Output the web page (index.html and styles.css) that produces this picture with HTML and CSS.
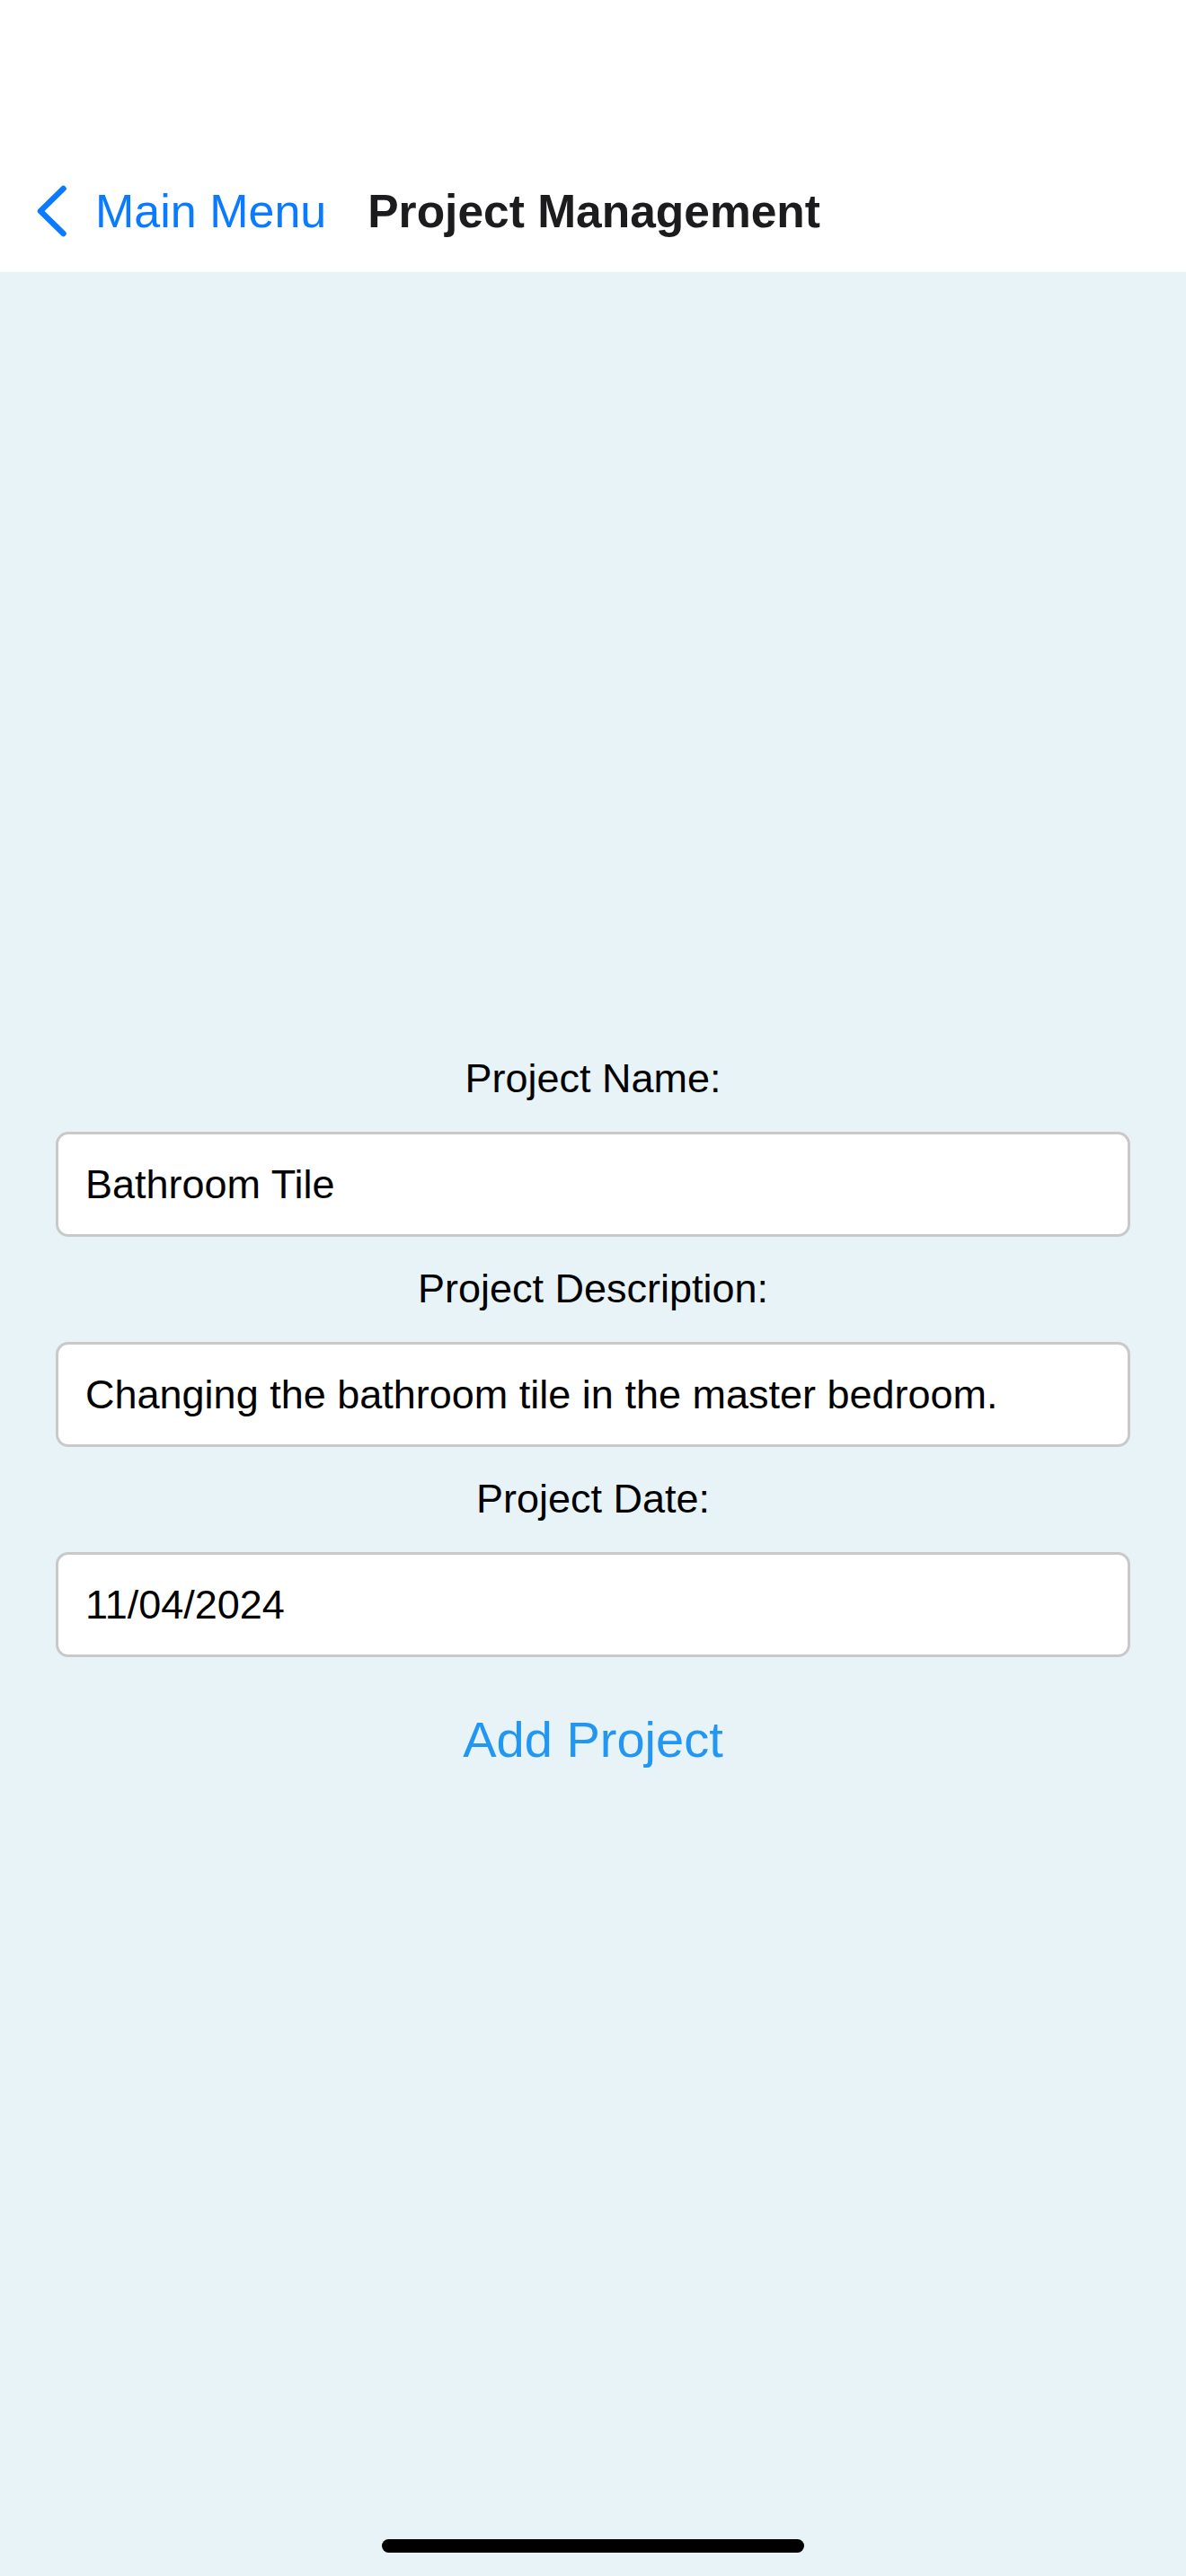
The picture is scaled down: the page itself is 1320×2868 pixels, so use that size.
FILE: index.html
```html
<!DOCTYPE html>
<html lang="en">
<head>
<meta charset="utf-8">
<title>Project Management</title>
<link rel="stylesheet" href="styles.css">
</head>
<body>
<div class="screen">
  <header class="navbar">
    <div class="nav-row">
      <a class="back" href="#">
        <svg class="chevron" width="35" height="58" viewBox="0 0 35 58" aria-hidden="true">
          <polyline points="30.5,4 5,29 30.5,54" fill="none" stroke="#0a7aff" stroke-width="6.5" stroke-linecap="round" stroke-linejoin="round"/>
        </svg>
        <span class="back-label">Main Menu</span>
      </a>
      <h1 class="title">Project Management</h1>
    </div>
  </header>
  <main class="content">
    <form class="form">
      <div class="field">
        <label class="label" for="name">Project Name:</label>
        <input class="input" id="name" type="text" value="Bathroom Tile">
      </div>
      <div class="field">
        <label class="label" for="desc">Project Description:</label>
        <input class="input" id="desc" type="text" value="Changing the bathroom tile in the master bedroom.">
      </div>
      <div class="field">
        <label class="label" for="date">Project Date:</label>
        <input class="input" id="date" type="text" value="11/04/2024">
      </div>
      <button class="add" type="button">Add Project</button>
    </form>
  </main>
  <div class="home-indicator"></div>
</div>
</body>
</html>
```
FILE: styles.css
```css
html, body {
  margin: 0;
  padding: 0;
}
body {
  font-family: "Liberation Sans", Arial, sans-serif;
  background: #e8f3f8;
}
.screen {
  position: relative;
  width: 1320px;
  height: 2868px;
  overflow: hidden;
  background: #e8f3f8;
}
.navbar {
  height: 303px;
  background: #ffffff;
  box-sizing: border-box;
  padding-top: 200px;
}
.nav-row {
  height: 70px;
  display: flex;
  align-items: center;
  padding-left: 40px;
}
.back {
  display: flex;
  align-items: center;
  text-decoration: none;
  color: #0a7aff;
}
.chevron {
  display: block;
  flex: none;
}
.back-label {
  margin-left: 31px;
  font-size: 52px;
  line-height: 61px;
  color: #0a7aff;
}
.title {
  margin: 0 0 0 46px;
  font-size: 51.5px;
  line-height: 61px;
  font-weight: 700;
  color: #1c1c1e;
}
.content {
  padding: 872px 62px 0;
}
.form {
  display: flex;
  flex-direction: column;
  gap: 32px;
}
.field {
  display: flex;
  flex-direction: column;
  align-items: stretch;
  gap: 33px;
}
.label {
  display: block;
  text-align: center;
  font-size: 45px;
  line-height: 52px;
  color: #000000;
}
.input {
  display: block;
  box-sizing: border-box;
  width: 100%;
  height: 117px;
  margin: 0;
  padding: 0 30px;
  border: 3px solid #c9c9c9;
  border-radius: 14px;
  background: #ffffff;
  font-family: "Liberation Sans", Arial, sans-serif;
  font-size: 45px;
  color: #000000;
  outline: none;
}
.add {
  align-self: center;
  margin-top: 28px;
  padding: 0;
  border: 0;
  background: none;
  font-family: "Liberation Sans", Arial, sans-serif;
  font-size: 56px;
  line-height: 64px;
  color: #2196f3;
}
.home-indicator {
  position: absolute;
  left: 425px;
  bottom: 26px;
  width: 470px;
  height: 15px;
  border-radius: 8px;
  background: #000000;
}
```
